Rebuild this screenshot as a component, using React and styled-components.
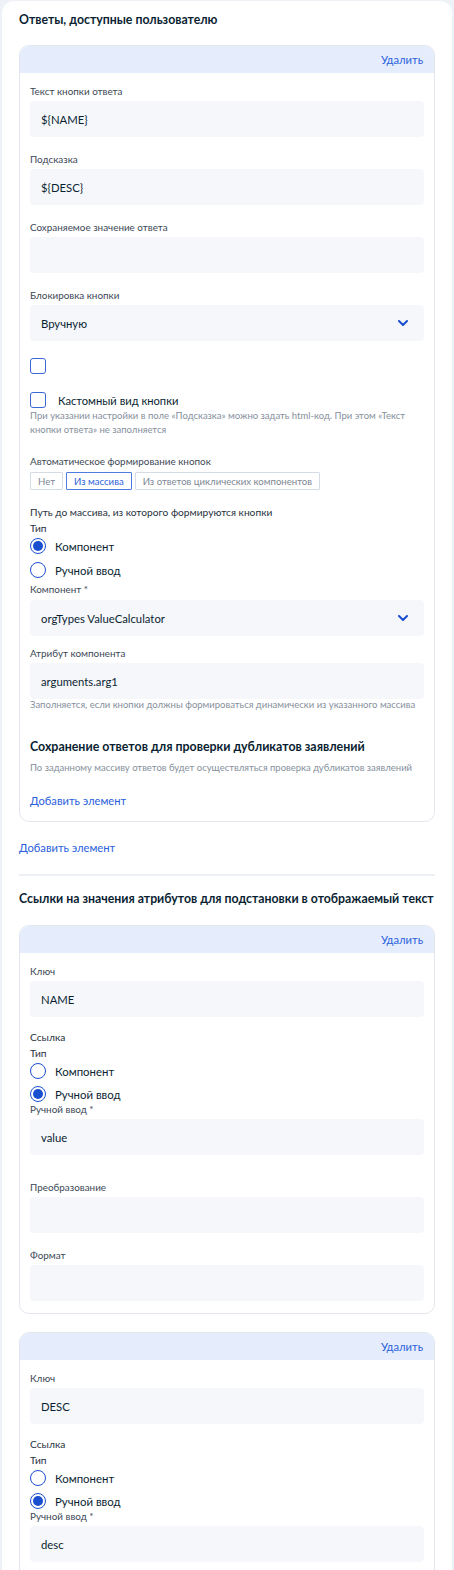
import React from "react";
import styled, { createGlobalStyle } from "styled-components";

const GlobalStyle = createGlobalStyle`
  * { box-sizing: border-box; }
  html, body { margin: 0; padding: 0; }
  body {
    background: #eef1f6;
    font-family: Lato, "Noto Sans", "Liberation Sans", sans-serif;
    color: #0b1f33;
    -webkit-font-smoothing: antialiased;
  }
`;

const Page = styled.div`
  padding: 1px 2px 0 2px;
`;

const Panel = styled.div`
  background: #fff;
  border-radius: 12px 12px 0 0;
  padding: 11px 17px 40px 17px;
  min-height: 1569px;
`;

const SectionTitle = styled.h2`
  margin: 0 0 ${(p) => p.$mb ?? 17}px 0;
  font-size: 12.3px;
  line-height: 16px;
  font-weight: 700;
  color: #0b1f33;
  white-space: nowrap;
`;

const ItemCard = styled.div`
  border: 1px solid #e2e7ee;
  border-radius: 10px;
  overflow: hidden;
  background: #fff;
  margin-bottom: 18px;
`;

const CardHeader = styled.div`
  height: 27px;
  background: #e5edfd;
  display: flex;
  justify-content: flex-end;
  align-items: center;
  padding: 0 11px 0 11px;
`;

const LinkButton = styled.button`
  display: block;
  border: none;
  background: none;
  padding: 0;
  font-family: inherit;
  font-size: 11.2px;
  line-height: 16px;
  height: 16px;
  color: #2a60dc;
  cursor: pointer;
  margin-top: ${(p) => p.$mt ?? 0}px;
`;

const CardBody = styled.div`
  padding: 11px 10px ${(p) => p.$pb ?? 12}px 10px;
`;

const Field = styled.div`
  margin-bottom: ${(p) => p.$mb ?? 15}px;
`;

const Label = styled.div`
  font-size: 9.9px;
  line-height: 14px;
  color: #3c4856;
  margin-bottom: ${(p) => p.$mb ?? 3}px;
`;

const GroupLabel = styled.div`
  font-size: 10.2px;
  line-height: 14px;
  color: #27313d;
  margin-bottom: ${(p) => p.$mb ?? 0}px;
`;

const InputBox = styled.div`
  height: 36px;
  background: #f5f7fa;
  border-radius: 4px;
  display: flex;
  align-items: center;
  justify-content: space-between;
  padding: 0 16px 0 11px;
  font-size: 11.3px;
  color: #0b1f33;
`;

const Chevron = () => (
  <svg width="10" height="6" viewBox="0 0 10 6" fill="none">
    <polyline points="1,1 5,5 9,1" stroke="#1a4fd0" strokeWidth="2" strokeLinecap="round" strokeLinejoin="round" />
  </svg>
);

const CheckRow = styled.label`
  display: flex;
  align-items: center;
  gap: 12px;
  height: 16px;
  margin-bottom: ${(p) => p.$mb ?? 0}px;
  font-size: 11.2px;
  color: #0b1f33;
`;

const CheckBox = styled.span`
  width: 16px;
  height: 16px;
  border: 1.5px solid #3a67d6;
  border-radius: 3px;
  flex: none;
`;

const Hint = styled.div`
  font-size: 9.5px;
  line-height: 14px;
  color: #86909c;
  margin-top: ${(p) => p.$mt ?? 0}px;
  margin-bottom: ${(p) => p.$mb ?? 0}px;
`;

const Segments = styled.div`
  display: flex;
  gap: 3px;
  margin-bottom: ${(p) => p.$mb ?? 0}px;
`;

const Segment = styled.button`
  height: 18px;
  padding: 0 7px;
  font-family: inherit;
  font-size: 9.6px;
  background: #fff;
  border: 1px solid ${(p) => (p.$active ? "#4d7be0" : "#d6dce5")};
  color: ${(p) => (p.$active ? "#2a5fd8" : "#7d8793")};
  border-radius: 1px;
`;

const RadioList = styled.div`
  display: flex;
  flex-direction: column;
  gap: ${(p) => p.$gap ?? 8}px;
  margin-top: 3px;
  margin-bottom: ${(p) => p.$mb ?? 4}px;
`;

const RadioRow = styled.label`
  display: flex;
  align-items: center;
  gap: 9px;
  height: 16px;
  font-size: 11.4px;
  color: #0b1f33;
`;

const RadioCircle = styled.span`
  width: 16px;
  height: 16px;
  border-radius: 50%;
  border: 1.5px solid #1a4fd0;
  flex: none;
  display: flex;
  align-items: center;
  justify-content: center;
  &::after {
    content: "";
    width: 10px;
    height: 10px;
    border-radius: 50%;
    background: #1a4fd0;
    display: ${(p) => (p.$checked ? "block" : "none")};
  }
`;

const SubTitle = styled.h3`
  margin: ${(p) => p.$mt ?? 0}px 0 6px 0;
  font-size: 12.4px;
  line-height: 16px;
  font-weight: 700;
  color: #0b1f33;
  white-space: nowrap;
`;

const Divider = styled.hr`
  border: none;
  height: 2px;
  background: #eceff3;
  margin: 18px 0 15px 0;
`;

const Radio = ({ checked, children }) => (
  <RadioRow>
    <RadioCircle $checked={checked} />
    {children}
  </RadioRow>
);

const TextField = ({ label, value, select, mb, labelMb }) => (
  <Field $mb={mb}>
    <Label $mb={labelMb}>{label}</Label>
    <InputBox>
      <span>{value}</span>
      {select && <Chevron />}
    </InputBox>
  </Field>
);

const RefCard = ({ keyValue, manual }) => (
  <ItemCard>
    <CardHeader>
      <LinkButton>Удалить</LinkButton>
    </CardHeader>
    <CardBody>
      <TextField label="Ключ" value={keyValue} mb={13} />
      <Field $mb={25}>
        <GroupLabel $mb={2}>Ссылка</GroupLabel>
        <GroupLabel>Тип</GroupLabel>
        <RadioList $mb={0} $gap={7}>
          <Radio>Компонент</Radio>
          <Radio checked>Ручной ввод</Radio>
        </RadioList>
        <Label>Ручной ввод *</Label>
        <InputBox>{manual}</InputBox>
      </Field>
      <TextField label="Преобразование" value="" />
      <TextField label="Формат" value="" mb={0} />
    </CardBody>
  </ItemCard>
);

export default function App() {
  return (
    <>
      <GlobalStyle />
      <Page>
        <Panel>
          <SectionTitle>Ответы, доступные пользователю</SectionTitle>
          <ItemCard>
            <CardHeader>
              <LinkButton>Удалить</LinkButton>
            </CardHeader>
            <CardBody $pb={12}>
              <TextField label="Текст кнопки ответа" value="${NAME}" />
              <TextField label="Подсказка" value="${DESC}" />
              <TextField label="Сохраняемое значение ответа" value="" />
              <TextField label="Блокировка кнопки" value="Вручную" select mb={17} />
              <CheckRow $mb={18}>
                <CheckBox />
              </CheckRow>
              <CheckRow>
                <CheckBox />
                Кастомный вид кнопки
              </CheckRow>
              <Hint $mt={1} $mb={17}>
                При указании настройки в поле «Подсказка» можно задать html-код. При этом «Текст
                кнопки ответа» не заполняется
              </Hint>
              <Label $mb={4}>Автоматическое формирование кнопок</Label>
              <Segments $mb={15}>
                <Segment>Нет</Segment>
                <Segment $active>Из массива</Segment>
                <Segment>Из ответов циклических компонентов</Segment>
              </Segments>
              <GroupLabel $mb={2}>Путь до массива, из которого формируются кнопки</GroupLabel>
              <GroupLabel>Тип</GroupLabel>
              <RadioList $mb={4}>
                <Radio checked>Компонент</Radio>
                <Radio>Ручной ввод</Radio>
              </RadioList>
              <TextField label="Компонент *" value="orgTypes ValueCalculator" select mb={10} labelMb={4} />
              <Field $mb={0}>
                <Label>Атрибут компонента</Label>
                <InputBox>arguments.arg1</InputBox>
                <Hint $mt={-1}>Заполняется, если кнопки должны формироваться динамически из указанного массива</Hint>
              </Field>
              <SubTitle $mt={27}>Сохранение ответов для проверки дубликатов заявлений</SubTitle>
              <Hint>По заданному массиву ответов будет осуществляться проверка дубликатов заявлений</Hint>
              <LinkButton $mt={18}>Добавить элемент</LinkButton>
            </CardBody>
          </ItemCard>
          <LinkButton>Добавить элемент</LinkButton>
          <Divider />
          <SectionTitle $mb={18}>Ссылки на значения атрибутов для подстановки в отображаемый текст</SectionTitle>
          <RefCard keyValue="NAME" manual="value" />
          <RefCard keyValue="DESC" manual="desc" />
        </Panel>
      </Page>
    </>
  );
}
